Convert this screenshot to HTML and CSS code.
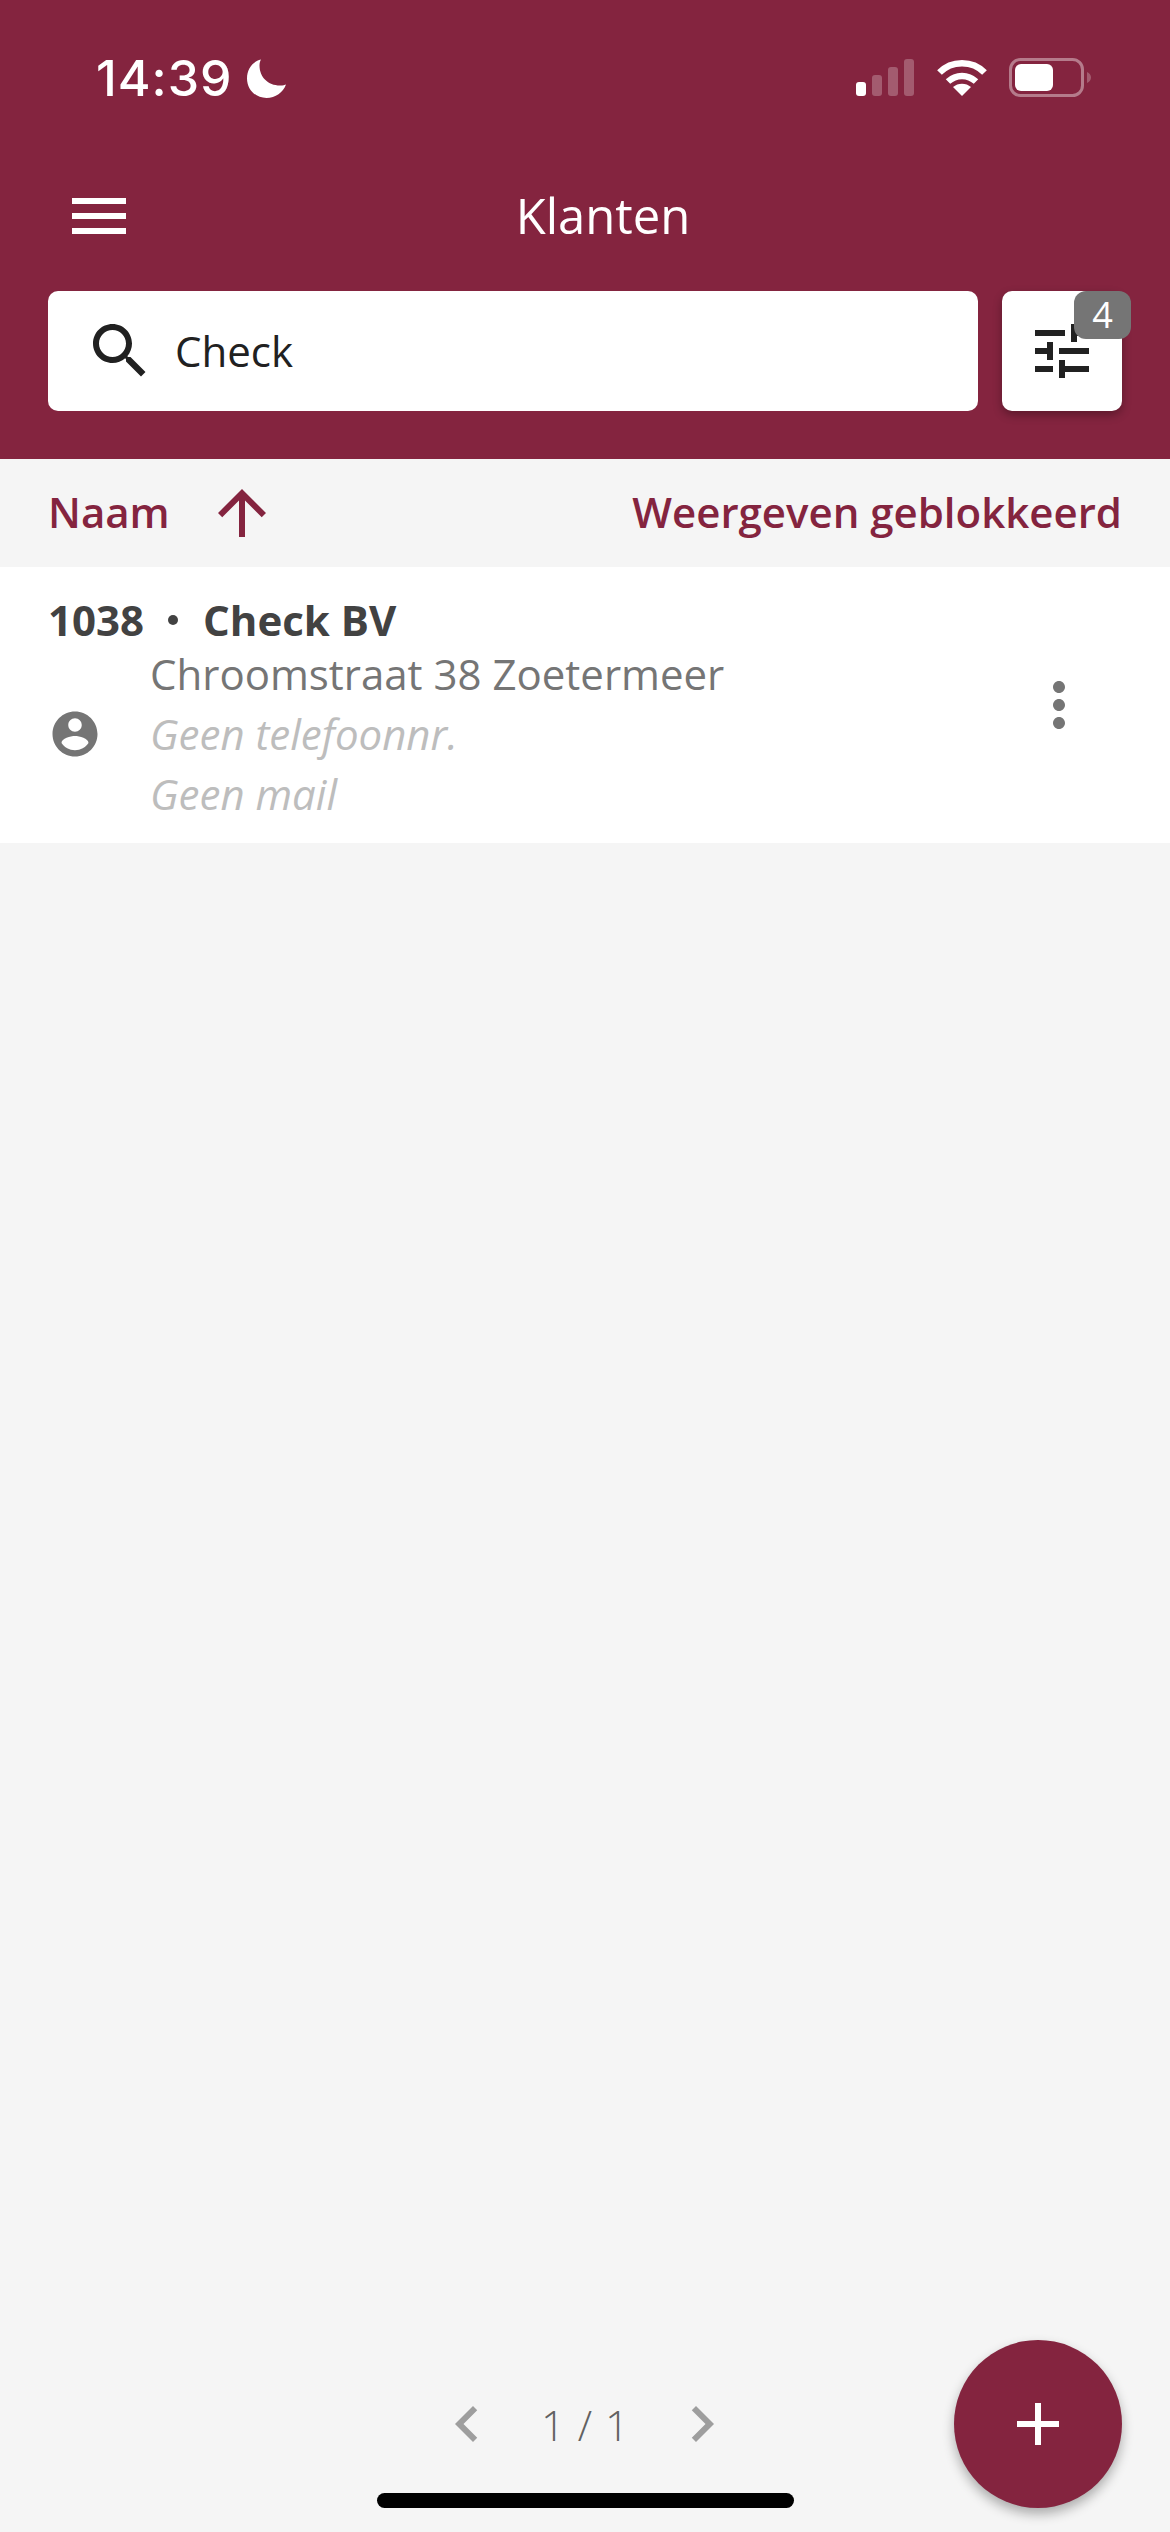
FILE: index.html
```html
<!DOCTYPE html>
<html lang="nl">

<head>
    <meta charset="UTF-8">
    <meta name="viewport" content="width=device-width, initial-scale=1.0">
    <title>Klanten</title>
    <link rel="stylesheet" href="styles.css">
</head>

<body>
    <div class="page">
        <header class="top">
            <div class="status">
                <div class="status-left">
                    <span class="time">14:39</span>
                    <svg class="moon" viewBox="0 0 39 39"><path d="M14 .5C5.5 2.5 0 10.5 0 19.5 0 30.5 8.5 39 19.5 39c9 0 16.5-5.5 19.5-13.500-1 .5-3 1-6 1-12 0-20.500-8.500-20.500-20 0-2.500.5-4.500 1.500-6z"/></svg>
                </div>
                <div class="status-right">
                    <svg class="signal" viewBox="0 0 58 37">
                        <rect x="0" y="23" width="10" height="14" rx="3"/>
                        <rect class="dim" x="16" y="16" width="10" height="21" rx="3"/>
                        <rect class="dim" x="32" y="8" width="10" height="29" rx="3"/>
                        <rect class="dim" x="48" y="0" width="10" height="37" rx="3"/>
                    </svg>
                    <svg class="wifi" viewBox="0 0 50 37">
                        <path class="wifi-arc" d="M2.500 13.500C14.500 1 35.500 1 47.500 13.500"/>
                        <path class="wifi-arc" d="M11 22.500c8-7.500 20-7.500 28 0"/>
                        <path d="M25 37l-9-9c5-4.500 13-4.500 18 0z"/>
                    </svg>
                    <svg class="battery" viewBox="0 0 82 39">
                        <rect class="battery-edge" x="1.500" y="1.500" width="72" height="36" rx="10"/>
                        <rect x="6" y="6" width="38" height="27" rx="6"/>
                        <path class="dim" d="M78 14c2.500 1 4 3 4 5.500s-1.500 4.500-4 5.500z"/>
                    </svg>
                </div>
            </div>

            <div class="title-bar">
                <svg class="icon menu-icon" viewBox="0 0 24 24"><path d="M3 18h18v-2H3v2zm0-5h18v-2H3v2zm0-7v2h18V6H3z"/></svg>
                <h1 class="title">Klanten</h1>
            </div>

            <div class="search-bar">
                <div class="search">
                    <svg class="icon" viewBox="0 0 24 24"><path d="M15.500 14h-.79l-.28-.27C15.410 12.590 16 11.110 16 9.500 16 5.910 13.090 3 9.500 3S3 5.910 3 9.500 5.910 16 9.500 16c1.610 0 3.090-.59 4.230-1.570l.27.28v.79l5 4.990L20.490 19l-4.990-5zm-6 0C7.010 14 5 11.990 5 9.500S7.010 5 9.500 5 14 7.010 14 9.500 11.990 14 9.500 14z"/></svg>
                    <span class="search-text">Check</span>
                </div>
                <div class="filter">
                    <svg class="icon" viewBox="0 0 24 24"><path d="M3 17v2h6v-2H3zM3 5v2h10V5H3zm10 16v-2h8v-2h-8v-2h-2v6h2zM7 9v2H3v2h4v2h2V9H7zm14 4v-2H11v2h10zm-6-4h2V7h4V5h-4V3h-2v6z"/></svg>
                    <span class="badge">4</span>
                </div>
            </div>
        </header>

        <div class="sort">
            <div class="sort-left">
                <span class="sort-name">Naam</span>
                <svg class="icon" viewBox="0 0 24 24"><path d="M4 12l1.410 1.410L11 7.830V20h2V7.830l5.580 5.590L20 12l-8-8-8 8z"/></svg>
            </div>
            <span class="sort-link">Weergeven geblokkeerd</span>
        </div>

        <div class="row">
            <div class="row-main">
                <div class="row-title">
                    <span>1038</span>
                    <span class="dot"></span>
                    <span>Check BV</span>
                </div>
                <div class="row-body">
                    <svg class="person" viewBox="0 0 24 24"><path d="M12 2C6.480 2 2 6.480 2 12s4.480 10 10 10 10-4.480 10-10S17.520 2 12 2zm0 3c1.660 0 3 1.340 3 3s-1.340 3-3 3-3-1.340-3-3 1.340-3 3-3zm0 14.200c-2.500 0-4.710-1.280-6-3.220.03-1.990 4-3.080 6-3.080 1.990 0 5.970 1.090 6 3.080-1.290 1.940-3.500 3.220-6 3.220z"/></svg>
                    <div class="details">
                        <div class="address">Chroomstraat 38 Zoetermeer</div>
                        <div class="empty">Geen telefoonnr.</div>
                        <div class="empty">Geen mail</div>
                    </div>
                </div>
            </div>
            <svg class="icon more" viewBox="0 0 24 24"><path d="M12 8c1.100 0 2-.9 2-2s-.9-2-2-2-2 .9-2 2 .9 2 2 2zm0 2c-1.100 0-2 .9-2 2s.9 2 2 2 2-.9 2-2-.9-2-2-2zm0 6c-1.100 0-2 .9-2 2s.9 2 2 2 2-.9 2-2-.9-2-2-2z"/></svg>
        </div>

        <div class="pager">
            <svg class="icon pager-arrow" viewBox="0 0 24 24"><path d="M15.410 7.410L14 6l-6 6 6 6 1.410-1.410L10.830 12z"/></svg>
            <span class="pager-text">1 / 1</span>
            <svg class="icon pager-arrow" viewBox="0 0 24 24"><path d="M10 6L8.590 7.410 13.170 12l-4.580 4.590L10 18l6-6z"/></svg>
        </div>

        <div class="fab">
            <svg class="icon" viewBox="0 0 24 24"><path d="M19 13h-6v6h-2v-6H5v-2h6V5h2v6h6v2z"/></svg>
        </div>
        <div class="home-bar"></div>
    </div>
</body>

</html>
```

FILE: styles.css
```css
* {
    margin: 0;
    padding: 0;
    box-sizing: border-box;
}

body {
    background-color: #f5f5f5;
    font-family: "Open Sans", "Noto Sans", sans-serif;
}

.page {
    position: relative;
    display: flex;
    flex-direction: column;
    width: 1170px;
    height: 2532px;
    overflow: hidden;
}

.icon {
    display: block;
    flex: none;
    width: 72px;
    height: 72px;
}

/* header */
.top {
    height: 459px;
    background-color: #84243f;
    color: white;
    fill: white;
}

.status {
    display: flex;
    justify-content: space-between;
    height: 180px;
    padding: 58px 79px 0 96px;
}

.status-left {
    display: flex;
    gap: 14px;
    height: 40px;
}

.time {
    font-family: Inter, Roboto, sans-serif;
    font-size: 50px;
    font-weight: 500;
    line-height: 40px;
    letter-spacing: 1px;
}

.moon {
    width: 39px;
    height: 39px;
    margin-top: 1px;
}

.status-right {
    display: flex;
    gap: 23px;
    height: 39px;
}

.signal {
    width: 58px;
    height: 37px;
    margin-top: 1px;
}

.wifi {
    width: 50px;
    height: 37px;
    margin-top: 1px;
}

.battery {
    width: 82px;
    height: 39px;
    margin-left: -1px;
}

.dim {
    opacity: .25;
}

.wifi-arc {
    fill: none;
    stroke: white;
    stroke-width: 6.500;
}

.battery-edge {
    fill: none;
    stroke: white;
    stroke-width: 3;
    opacity: .4;
}

.title-bar {
    position: relative;
    display: flex;
    justify-content: center;
    align-items: center;
    height: 72px;
}

.menu-icon {
    position: absolute;
    left: 63px;
    top: 0;
}

.title {
    margin-left: 36px;
    margin-top: -2px;
    font-size: 49px;
    font-weight: 500;
}

.search-bar {
    display: flex;
    gap: 24px;
    margin-top: 39px;
    padding: 0 48px;
}

.search {
    display: flex;
    flex: 1;
    align-items: center;
    gap: 19px;
    height: 120px;
    padding-left: 36px;
    background-color: white;
    border-radius: 10px;
    color: #212121;
    fill: #212121;
}

.search-text {
    margin-top: -2px;
    font-size: 42px;
}

.filter {
    position: relative;
    display: flex;
    justify-content: center;
    align-items: center;
    width: 120px;
    height: 120px;
    background-color: white;
    border-radius: 10px;
    box-shadow: 0 4px 10px rgba(0, 0, 0, .3);
    fill: #212121;
}

.badge {
    position: absolute;
    top: 0;
    right: -9px;
    width: 57px;
    height: 48px;
    background-color: #757575;
    border-radius: 12px;
    color: white;
    font-size: 36px;
    line-height: 48px;
    text-align: center;
}

/* sort row */
.sort {
    display: flex;
    justify-content: space-between;
    align-items: center;
    height: 108px;
    padding: 0 48px;
    color: #84243f;
    fill: #84243f;
    font-size: 42px;
    font-weight: 600;
}

.sort-left {
    display: flex;
    align-items: center;
    gap: 36px;
}

.sort-name,
.sort-link {
    margin-top: -3px;
}

/* customer row */
.row {
    display: flex;
    align-items: center;
    height: 276px;
    padding-right: 75px;
    background-color: white;
}

.row-main {
    flex: 1;
    align-self: flex-start;
    padding: 26px 0 0 48px;
}

.row-title {
    display: flex;
    align-items: center;
    height: 53px;
    margin-bottom: -2px;
    color: #424242;
    font-size: 42px;
    font-weight: 700;
}

.dot {
    width: 10px;
    height: 10px;
    margin: 0 25px 0 24px;
    background-color: #424242;
    border-radius: 50%;
}

.row-body {
    display: flex;
    align-items: center;
    gap: 48px;
}

.person {
    width: 54px;
    height: 54px;
    fill: #757575;
}

.address {
    color: #757575;
    font-size: 42px;
    line-height: 60px;
}

.empty {
    color: #bdbdbd;
    font-size: 42px;
    font-style: italic;
    line-height: 60px;
}

.more {
    fill: #757575;
}

/* bottom */
.pager {
    display: flex;
    align-items: center;
    margin-top: auto;
    margin-bottom: 72px;
    margin-left: 431px;
    fill: #9e9e9e;
}

.pager-text {
    width: 163px;
    padding-left: 2px;
    color: #616161;
    font-size: 42px;
    font-weight: 300;
    letter-spacing: 1px;
    text-align: center;
}

.fab {
    position: absolute;
    left: 954px;
    top: 2340px;
    display: flex;
    justify-content: center;
    align-items: center;
    width: 168px;
    height: 168px;
    background-color: #84243f;
    border-radius: 50%;
    box-shadow: 0 6px 12px rgba(0, 0, 0, .3);
    fill: white;
}

.home-bar {
    position: absolute;
    left: 377px;
    top: 2493px;
    width: 417px;
    height: 15px;
    background-color: black;
    border-radius: 8px;
}
```
